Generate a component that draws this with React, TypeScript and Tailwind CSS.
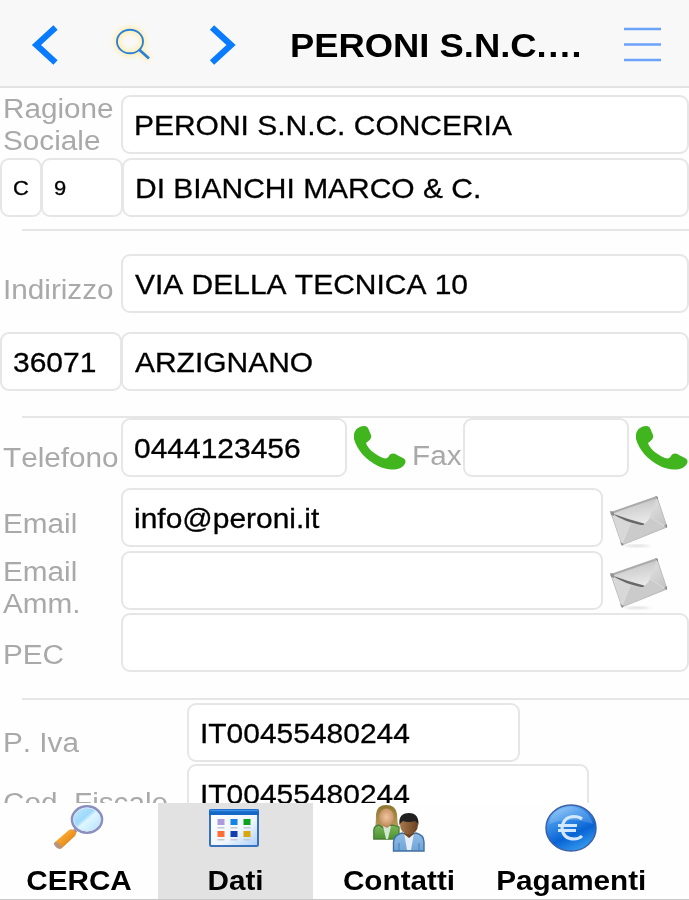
import type { ReactNode } from 'react';
import clsx from 'clsx';

function Label({ children, className }: { children: ReactNode; className?: string }) {
  return (
    <div className={clsx('shrink-0 text-[27px] leading-[32px] text-[#a9a9a9]', className)}>
      <span className="inline-block origin-left scale-x-[1.1] whitespace-nowrap">{children}</span>
    </div>
  );
}

function Field({ value, className, small }: { value?: string; className?: string; small?: boolean }) {
  return (
    <div
      className={clsx(
        'flex h-[59px] shrink-0 items-center rounded-[9px] border-2 border-[#e6e6e6] bg-white pt-[2px] pl-[11px] text-black',
        small ? 'text-[20.5px]' : 'text-[28px]',
        className
      )}
    >
      <span className="inline-block origin-left scale-x-[1.07] whitespace-nowrap [-webkit-text-stroke:0.3px_black]">
        {value}
      </span>
    </div>
  );
}

function Divider({ className }: { className?: string }) {
  return <div className={clsx('ml-[22px] h-[2px] shrink-0 bg-[#e6e6e6]', className)} />;
}

function Phone({ className }: { className?: string }) {
  return (
    <svg width="52" height="44" viewBox="0 0 52 44" className={clsx('shrink-0', className)}>
      <path
        d="M4 2C7 0 12-1 14 2L17 9C18 12 16 14 12 17C14 23 20 28 29 32C32 33 34 32 35 30C37 27 40 27 43 29L49 32C53 34 52 38 48 41C42 45 32 44 24 40C12 34 3 24 0 13C-1 8 1 4 4 2Z"
        fill="#40b51d"
      />
    </svg>
  );
}

function Envelope({ className }: { className?: string }) {
  return (
    <svg width="60" height="54" viewBox="0 0 60 54" className={clsx('shrink-0', className)}>
      <defs>
        <linearGradient id="paper" x1="0" y1="0" x2="1" y2="1">
          <stop offset="0" stopColor="#c9c9c9" />
          <stop offset=".5" stopColor="#d9d9d9" />
          <stop offset="1" stopColor="#b2b2b2" />
        </linearGradient>
        <linearGradient id="flap" x1=".2" y1="0" x2=".5" y2="1">
          <stop offset="0" stopColor="#b2b2b2" />
          <stop offset=".4" stopColor="#d0d0d0" />
          <stop offset="1" stopColor="#e9e9e9" />
        </linearGradient>
        <filter id="soft">
          <feGaussianBlur stdDeviation="1.2" />
        </filter>
      </defs>
      <path d="M13 50Q28 47 43 50Q28 52 13 50Z" fill="#dcdcdc" filter="url(#soft)" />
      <path d="M2 17L48 1L58 31L13 49Z" fill="url(#paper)" stroke="#bcbcbc" strokeWidth="1" strokeLinejoin="round" />
      <path d="M3 18L21 28L13 48Z" fill="#d8d8d8" />
      <path d="M21 28L13 48L57 30L41 21L35 28Z" fill="#cbcbcb" />
      <path d="M21 28L13 48M41 21L57 31" stroke="#dcdcdc" strokeWidth="1" />
      <path d="M2 17L48 1L40 23Q37 28 33 28Z" fill="url(#flap)" />
      <path d="M3 17.5Q18 23 35 27.5Q36 29 32 29Q16 26 3 17.5Z" fill="#686868" />
      <path d="M2 17L48 1" stroke="#ababab" strokeWidth="2" />
      <path d="M1 15L5 16L5 20L2 19ZM46 0L49 1L49 4ZM55 30L58 28L58 32ZM11 46L15 48L13 50Z" fill="#909090" />
    </svg>
  );
}

function CercaIcon() {
  return (
    <svg width="50" height="47" viewBox="0 0 50 47">
      <defs>
        <linearGradient id="lens" x1="0" y1="0" x2="1" y2="1">
          <stop offset="0" stopColor="#c5ecff" />
          <stop offset=".42" stopColor="#9dd8fb" />
          <stop offset=".52" stopColor="#dff6ff" />
          <stop offset="1" stopColor="#a9e0ff" />
        </linearGradient>
        <linearGradient id="handle" x1="0" y1="0" x2="1" y2="1">
          <stop offset="0" stopColor="#ffc45c" />
          <stop offset=".5" stopColor="#f39a22" />
          <stop offset="1" stopColor="#b8722b" />
        </linearGradient>
      </defs>
      <path d="M18 29L22 25" stroke="#9b91a8" strokeWidth="4" />
      <path d="M1 37L15 25Q18 23 21 26Q23 28 21 31L8 43Q5 45 2 42Q-1 39 1 37Z" fill="url(#handle)" />
      <path d="M1 37Q6 37 8 43Q5 45 2 42Q-1 39 1 37Z" fill="#b59484" />
      <ellipse cx="33" cy="14.5" rx="15" ry="13.2" fill="url(#lens)" stroke="#8b8fbd" strokeWidth="2.6" />
      <ellipse cx="33" cy="14.5" rx="13.4" ry="11.6" fill="none" stroke="#d5e5f8" strokeWidth="1" />
    </svg>
  );
}

function DatiIcon() {
  const colors = ['#ac9cdc', '#1582e6', '#0ba31d', '#ff6e35', '#123fae', '#d9a70b'];
  return (
    <svg width="50" height="38" viewBox="0 0 50 38">
      <defs>
        <linearGradient id="win" x1="0" y1="0" x2="1" y2="1">
          <stop offset="0" stopColor="#ffffff" />
          <stop offset=".6" stopColor="#eff6ff" />
          <stop offset="1" stopColor="#a9cffa" />
        </linearGradient>
      </defs>
      <rect x="1" y="1" width="48" height="36" rx="1.5" fill="url(#win)" stroke="#3971bd" strokeWidth="2" />
      <path d="M0 6V2Q0 0 2 0H48Q50 0 50 2V6Z" fill="#1668c6" />
      <path d="M1 1.5H49" stroke="#3c91e4" strokeWidth="1.5" />
      {colors.map((color, i) => (
        <g key={color}>
          <rect x={8.5 + (i % 3) * 13} y={i < 3 ? 10 : 22} width="7" height="6" fill={color} />
          <rect x={8.5 + (i % 3) * 13} y={i < 3 ? 18 : 30} width="7" height="1.5" fill="#c6c8cf" />
        </g>
      ))}
    </svg>
  );
}

function ContattiIcon() {
  return (
    <svg width="52" height="47" viewBox="0 0 52 47">
      <defs>
        <linearGradient id="hair" x1="0" y1="0" x2="0" y2="1">
          <stop offset="0" stopColor="#8d762f" />
          <stop offset="1" stopColor="#b99d59" />
        </linearGradient>
        <radialGradient id="face">
          <stop offset="0" stopColor="#f0c4a0" />
          <stop offset="1" stopColor="#c99468" />
        </radialGradient>
        <linearGradient id="skin" x1="0" y1="0" x2="1" y2="0">
          <stop offset="0" stopColor="#a8774d" />
          <stop offset="1" stopColor="#68401f" />
        </linearGradient>
        <linearGradient id="green" x1="0" y1="0" x2="0" y2="1">
          <stop offset="0" stopColor="#7bb75b" />
          <stop offset="1" stopColor="#4b9430" />
        </linearGradient>
        <linearGradient id="blue" x1="0" y1="0" x2="0" y2="1">
          <stop offset="0" stopColor="#91bce6" />
          <stop offset="1" stopColor="#6fa5d8" />
        </linearGradient>
      </defs>
      <path d="M2 23Q3 18 3 9Q4 0 13 0Q23 0 24 9Q24 17 26 23Z" fill="url(#hair)" />
      <path d="M.8 34V25Q1 21 6 20L12 24L19 20L26 22V34Z" fill="url(#green)" stroke="#4b7c38" strokeWidth="1.3" />
      <path d="M10 21L13 34H15L18 21Z" fill="#d3e6d2" />
      <path d="M10 17H17V21L14 23L10 21Z" fill="#bd875c" />
      <ellipse cx="13.5" cy="12" rx="7.3" ry="8.5" fill="url(#face)" />
      <path d="M20.5 46V37Q21 30 29 28L35 30L43 28Q51 30 51 37V46Z" fill="url(#blue)" stroke="#426f9f" strokeWidth="1.4" />
      <path d="M31 28L36 32L41 28L38 45H34Z" fill="#e6edf6" />
      <path d="M26 38V45M46 38V45" stroke="#4b7fb5" strokeWidth="1" />
      <path d="M31 25H41V29L36 33L31 29Z" fill="#6b4223" />
      <ellipse cx="36" cy="20" rx="9" ry="9.5" fill="url(#skin)" />
      <path d="M26.5 20Q25 8 36 8Q46 8 45.5 20Q44 17 42 16Q36 18 30 16Q28 17 26.5 20Z" fill="#202020" />
    </svg>
  );
}

function PagamentiIcon() {
  return (
    <svg width="52" height="48" viewBox="0 0 52 48">
      <defs>
        <linearGradient id="coin" x1=".2" y1="0" x2=".7" y2="1">
          <stop offset="0" stopColor="#8cc7fa" />
          <stop offset=".3" stopColor="#3c91e9" />
          <stop offset=".65" stopColor="#0864d4" />
          <stop offset="1" stopColor="#399ef0" />
        </linearGradient>
      </defs>
      <ellipse cx="26" cy="24" rx="25" ry="23" fill="url(#coin)" stroke="#3e5fa8" strokeWidth="1.5" />
      <path d="M4 20Q8 4 26 3Q43 4 48 20Q26 12 4 20Z" fill="#ffffff" opacity=".16" />
      <path
        d="M37 15Q34 12.5 29 12.5Q18 13 17 24Q18 35 29 35Q34 35 37 32M13 21.5H32M13 26.5H31"
        fill="none"
        stroke="#d1e8ff"
        strokeWidth="3"
      />
    </svg>
  );
}

const tabs = [
  { name: 'CERCA', icon: <CercaIcon />, width: 'w-[158px]', pad: 'pt-[2px]' },
  { name: 'Dati', icon: <DatiIcon />, width: 'w-[155px]', pad: 'pt-[6px] pr-[3px]', active: true },
  { name: 'Contatti', icon: <ContattiIcon />, width: 'w-[172px]', pad: 'pt-[2px]' },
  { name: 'Pagamenti', icon: <PagamentiIcon />, width: 'w-[173px]', pad: 'pt-[1px] pr-[2px]' },
];

export default function App() {
  return (
    <div className="flex h-[900px] w-[689px] flex-col overflow-hidden bg-[#fefefe] font-['Liberation_Sans',Arial,sans-serif] [font-kerning:none]">
      <header className="flex h-[88px] shrink-0 items-start border-b-2 border-[#e2e2e2] bg-[#f8f8f8] pl-[30px]">
        <button className="mt-[24px]">
          <svg width="30" height="42" viewBox="0 0 30 42" fill="none" stroke="#087bff" strokeWidth="6.3">
            <path d="M25.5 3.5L6.5 21L25.5 38.5" />
          </svg>
        </button>
        <button className="mt-[18px] ml-[48px]">
          <svg width="52" height="52" viewBox="0 0 52 52" fill="none">
            <defs>
              <filter id="glow" x="-40%" y="-40%" width="180%" height="180%">
                <feGaussianBlur stdDeviation="2.5" />
              </filter>
            </defs>
            <g stroke="#ffeeb0" strokeWidth="6" filter="url(#glow)">
              <ellipse cx="22" cy="23.5" rx="13" ry="11.8" />
              <path d="M31 32L41 41" />
            </g>
            <ellipse cx="22" cy="23.5" rx="13" ry="11.8" stroke="#2b80d7" strokeWidth="1.9" />
            <path d="M31 31.5L41 40.5" stroke="#2b80d7" strokeWidth="2.8" />
          </svg>
        </button>
        <button className="mt-[24px] ml-[46px]">
          <svg width="32" height="42" viewBox="0 0 32 42" fill="none" stroke="#087bff" strokeWidth="6.3">
            <path d="M6 3.5L25 21L6 38.5" />
          </svg>
        </button>
        <h1 className="mt-[25px] ml-[52px] w-[334px] text-[34px] leading-[40px] font-bold text-black">
          <span className="inline-block origin-left scale-x-[1.07] whitespace-nowrap">PERONI S.N.C.…</span>
        </h1>
        <button className="mt-[27px]">
          <svg width="37" height="36" viewBox="0 0 37 36" stroke="#6ba3fb" strokeWidth="2.5">
            <path d="M0 2H37M0 17.4H37M0 33H37" />
          </svg>
        </button>
      </header>

      <main className="flex h-[715px] shrink-0 flex-col overflow-hidden pt-[7px]">
        <div className="flex h-[59px] shrink-0">
          <Label className="-mt-[2px] w-[121px] pl-[3px]">
            Ragione
            <br />
            Sociale
          </Label>
          <Field value="PERONI S.N.C. CONCERIA" className="w-[568px]" />
        </div>
        <div className="mt-[4px] flex h-[59px] shrink-0">
          <Field value="C" small className="w-[42px]" />
          <Field value="9" small className="-ml-px w-[82px]" />
          <Field value="DI BIANCHI MARCO & C." className="-ml-px w-[567px] pl-[10px]" />
        </div>
        <Divider className="mt-[12px]" />

        <div className="mt-[23px] flex h-[59px] shrink-0">
          <Label className="mt-[20px] w-[121px] pl-[3px]">Indirizzo</Label>
          <Field value="VIA DELLA TECNICA 10" className="w-[568px] pl-[12px]" />
        </div>
        <div className="mt-[19px] flex h-[59px] shrink-0">
          <Field value="36071" className="w-[122px] pl-[10px]" />
          <Field value="ARZIGNANO" className="-ml-px w-[568px] pl-[12px]" />
        </div>
        <Divider className="mt-[25px]" />

        <div className="flex h-[59px] shrink-0">
          <Label className="mt-[24px] w-[121px] pl-[3px]">Telefono</Label>
          <Field value="0444123456" className="w-[226px]" />
          <Phone className="mt-[8px] ml-[7px]" />
          <Label className="mt-[22px] w-[57px] pl-[6px]">Fax</Label>
          <Field className="w-[166px]" />
          <Phone className="mt-[8px] ml-[7px]" />
        </div>
        <div className="mt-[11px] flex h-[59px] shrink-0">
          <Label className="mt-[20px] w-[121px] pl-[3px]">Email</Label>
          <Field value="info@peroni.it" className="w-[482px]" />
          <Envelope className="mt-[8px] ml-[6px]" />
        </div>
        <div className="mt-[4px] flex h-[59px] shrink-0">
          <Label className="mt-[5px] w-[121px] pl-[3px]">
            Email
            <br />
            Amm.
          </Label>
          <Field className="w-[482px]" />
          <Envelope className="mt-[7px] ml-[6px]" />
        </div>
        <div className="mt-[3px] flex h-[59px] shrink-0">
          <Label className="mt-[26px] w-[121px] pl-[3px]">PEC</Label>
          <Field className="w-[568px]" />
        </div>
        <Divider className="mt-[26px]" />

        <div className="mt-[3px] flex h-[59px] shrink-0">
          <Label className="mt-[24px] w-[187px] pl-[3px]">P. Iva</Label>
          <Field value="IT00455480244" className="w-[333px]" />
        </div>
        <div className="mt-[2px] flex h-[59px] shrink-0">
          <Label className="mt-[23px] w-[187px] pl-[3px]">Cod. Fiscale</Label>
          <Field value="IT00455480244" className="w-[402px]" />
        </div>
      </main>

      <nav className="flex h-[97px] shrink-0 border-b border-[#c9c9c9]">
        {tabs.map((tab) => (
          <button
            key={tab.name}
            className={clsx('flex h-full shrink-0 flex-col items-center', tab.width, tab.active && 'bg-[#e2e2e2]')}
          >
            <span className={clsx('block h-[62px]', tab.pad)}>{tab.icon}</span>
            <span className="inline-block scale-x-[1.1] text-[27px] leading-[32px] font-bold whitespace-nowrap text-black">
              {tab.name}
            </span>
          </button>
        ))}
      </nav>
    </div>
  );
}
